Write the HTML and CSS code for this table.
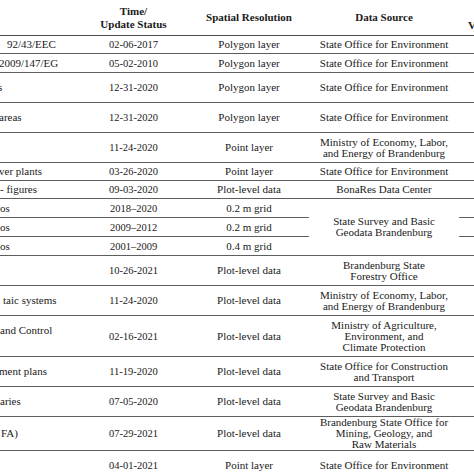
FILE: index.html
```html
<!DOCTYPE html>
<html>
<head>
<meta charset="utf-8">
<link rel="stylesheet" href="styles.css">
</head>
<body>
<div class="viewport">
<table class="data">
<colgroup>
<col class="w1"><col class="w2"><col class="w3"><col class="w4"><col class="w5">
</colgroup>
<thead>
<tr class="head">
<th></th>
<th>Time/<br>Update Status</th>
<th>Spatial Resolution</th>
<th>Data Source</th>
<th class="c5h"><div class="c5t">V</div></th>
</tr>
</thead>
<tbody>
<tr class="h18"><td class="c1 i7">92/43/EEC</td><td class="num">02-06-2017</td><td>Polygon layer</td><td>State Office for Environment</td><td></td></tr>
<tr class="h19"><td class="c1 n1">2009/147/EG</td><td class="num">05-02-2010</td><td>Polygon layer</td><td>State Office for Environment</td><td></td></tr>
<tr class="h30"><td class="c1 n2">s</td><td class="num">12-31-2020</td><td>Polygon layer</td><td>State Office for Environment</td><td></td></tr>
<tr class="h30"><td class="c1 n1">areas</td><td class="num">12-31-2020</td><td>Polygon layer</td><td>State Office for Environment</td><td></td></tr>
<tr class="h30"><td class="c1"></td><td class="num">11-24-2020</td><td>Point layer</td><td>Ministry of Economy, Labor,<br>and Energy of Brandenburg</td><td></td></tr>
<tr class="h18"><td class="c1 n1">ver plants</td><td class="num">03-26-2020</td><td>Point layer</td><td>State Office for Environment</td><td></td></tr>
<tr class="h18"><td class="c1">- figures</td><td class="num">09-03-2020</td><td>Plot-level data</td><td>BonaRes Data Center</td><td></td></tr>
<tr class="h19"><td class="c1">os</td><td class="num">2018–2020</td><td>0.2 m grid</td><td rowspan="3">State Survey and Basic<br>Geodata Brandenburg</td><td></td></tr>
<tr class="h19"><td class="c1">os</td><td class="num">2009–2012</td><td>0.2 m grid</td><td></td></tr>
<tr class="h19"><td class="c1">os</td><td class="num">2001–2009</td><td>0.4 m grid</td><td></td></tr>
<tr class="h30"><td class="c1"></td><td class="num">10-26-2021</td><td>Plot-level data</td><td>Brandenburg State<br>Forestry Office</td><td></td></tr>
<tr class="h30"><td class="c1 i3">taic systems</td><td class="num">11-24-2020</td><td>Plot-level data</td><td>Ministry of Economy, Labor,<br>and Energy of Brandenburg</td><td></td></tr>
<tr class="h41"><td class="c1">and Control<br>&nbsp;</td><td class="num">02-16-2021</td><td>Plot-level data</td><td>Ministry of Agriculture,<br>Environment, and<br>Climate Protection</td><td></td></tr>
<tr class="h30"><td class="c1 n1">ment plans</td><td class="num">11-19-2020</td><td>Plot-level data</td><td>State Office for Construction<br>and Transport</td><td></td></tr>
<tr class="h30"><td class="c1">aries</td><td class="num">07-05-2020</td><td>Plot-level data</td><td>State Survey and Basic<br>Geodata Brandenburg</td><td></td></tr>
<tr class="h33"><td class="c1 i1">FA)</td><td class="num">07-29-2021</td><td>Plot-level data</td><td>Brandenburg State Office for<br>Mining, Geology, and<br>Raw Materials</td><td></td></tr>
<tr class="h30"><td class="c1"></td><td class="num">04-01-2021</td><td>Point layer</td><td>State Office for Environment</td><td></td></tr>
</tbody>
</table>
</div>
</body>
</html>
```
FILE: styles.css
```css
html, body {
  margin: 0;
  padding: 0;
  background: #ffffff;
}

.viewport {
  width: 474px;
  height: 474px;
  overflow: hidden;
}

.data {
  border-collapse: collapse;
  table-layout: fixed;
  width: 519px;
  font-family: "Liberation Serif", "Times New Roman", serif;
  font-size: 11px;
  line-height: 11px;
  color: #1a1a1a;
}

.w1 { width: 78px; }
.w2 { width: 111px; }
.w3 { width: 120px; }
.w4 { width: 150px; }
.w5 { width: 60px; }

.data th {
  padding: 0;
  height: 35px;
  font-weight: bold;
  line-height: 13px;
  text-align: center;
  vertical-align: middle;
  border-bottom: 1px solid #4a4a4a;
  white-space: nowrap;
}

.data th.c5h {
  text-align: left;
  vertical-align: top;
}

.c5t {
  padding: 19px 0 0 9px;
}

.data td {
  padding: 0;
  text-align: center;
  vertical-align: middle;
  border-bottom: 1px solid #5e5e5e;
  white-space: nowrap;
  overflow: hidden;
}

.data td.c1 {
  text-align: left;
}

.data td.num {
  font-size: 10.5px;
}

.i7 { text-indent: 7px; }
.i3 { text-indent: 3px; }
.i1 { text-indent: 1px; }
.n1 { text-indent: -1px; }
.n2 { text-indent: -2px; }

.h18 { height: 18px; }
.h19 { height: 19px; }
.h30 { height: 30px; }
.h33 { height: 33px; }
.h41 { height: 41px; }
```
